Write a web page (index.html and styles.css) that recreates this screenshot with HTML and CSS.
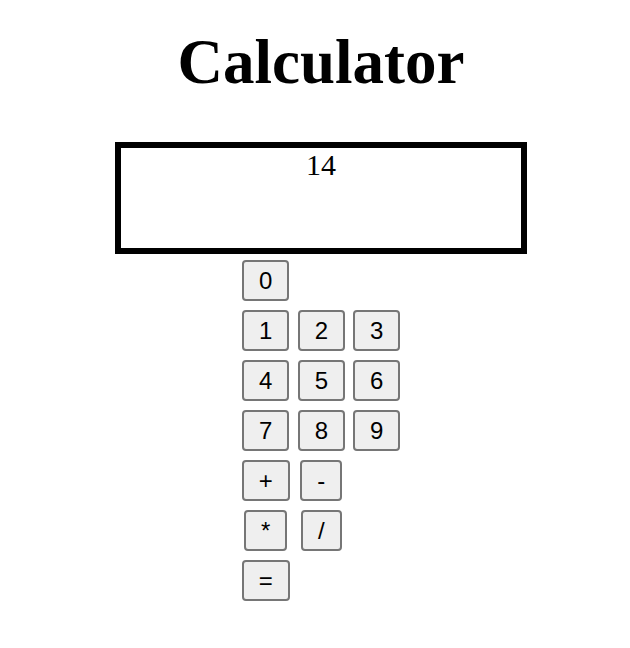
FILE: index.html
```html
<!DOCTYPE html>
<html lang="en">
<head>
    <meta charset="UTF-8">
    <title>Calculator</title>
    <link rel="stylesheet" href="styles.css">
</head>
<body>
    <h1>Calculator</h1>
    <div class="display">14</div>
    <div class="keys">
        <button class="new-row">0</button>

        <button class="new-row">1</button>
        <button>2</button>
        <button>3</button>

        <button class="new-row">4</button>
        <button>5</button>
        <button>6</button>

        <button class="new-row">7</button>
        <button>8</button>
        <button>9</button>

        <button class="new-row">+</button>
        <button>-</button>

        <button class="new-row">*</button>
        <button>/</button>

        <button class="new-row">=</button>
    </div>
</body>
</html>
```

FILE: styles.css
```css
* {
    box-sizing: border-box;
}

body {
    margin: 0;
    padding-left: 12px;
    font-family: "Liberation Serif", "Times New Roman", serif;
    color: #000;
    background: #fff;
}

h1 {
    margin: 26px 0 43px;
    font-size: 63px;
    font-weight: bold;
    text-align: center;
}

.display {
    width: 412px;
    height: 112px;
    margin: 0 auto;
    border: 6px solid #000;
    font-size: 30px;
    text-align: center;
}

.keys {
    display: grid;
    grid-template-columns: repeat(3, auto);
    justify-content: center;
    justify-items: center;
    column-gap: 8px;
    row-gap: 9px;
    margin-top: 6px;
}

.keys .new-row {
    grid-column: 1;
}

button {
    padding: 4px 15px;
    font-family: "Liberation Sans", Arial, sans-serif;
    font-size: 24px;
    line-height: 29px;
    color: #000;
    background: #efefef;
    border: 2px solid #767676;
    border-radius: 4px;
}
```
